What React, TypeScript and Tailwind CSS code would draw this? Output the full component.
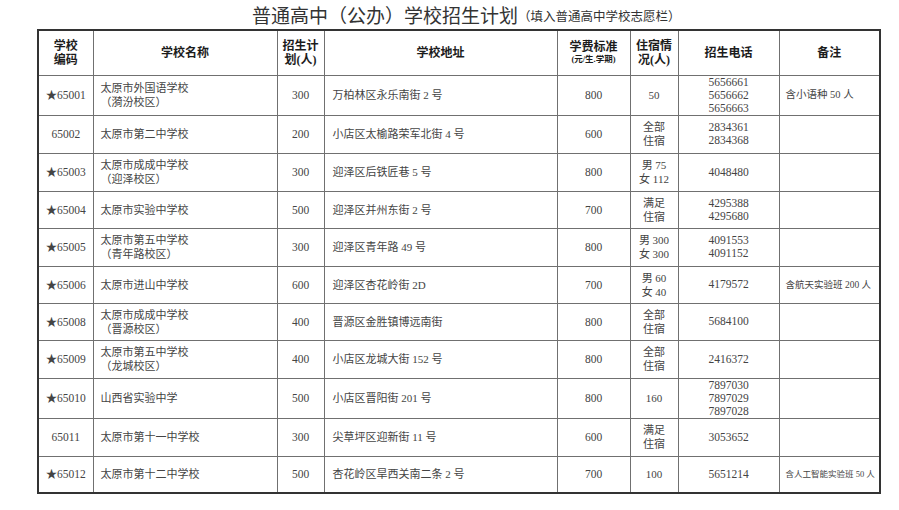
import React from 'react';

type Row = {
  code: string;
  name: string[];
  plan: string;
  addr: string;
  fee: string;
  dorm: string[];
  phone: string[];
  note?: string;
  noteSize?: string;
  h: string;
};

const rows: Row[] = [
  { code: '★65001', name: ['太原市外国语学校', '（漪汾校区）'], plan: '300', addr: '万柏林区永乐南街 2 号', fee: '800', dorm: ['50'], phone: ['5656661', '5656662', '5656663'], note: '含小语种 50 人', noteSize: 'text-[10.5px]', h: 'h-[40px]' },
  { code: '65002', name: ['太原市第二中学校'], plan: '200', addr: '小店区太榆路荣军北街 4 号', fee: '600', dorm: ['全部', '住宿'], phone: ['2834361', '2834368'], h: 'h-[38px]' },
  { code: '★65003', name: ['太原市成成中学校', '（迎泽校区）'], plan: '300', addr: '迎泽区后铁匠巷 5 号', fee: '800', dorm: ['男 75', '女 112'], phone: ['4048480'], h: 'h-[38px]' },
  { code: '★65004', name: ['太原市实验中学校'], plan: '500', addr: '迎泽区并州东街 2 号', fee: '700', dorm: ['满足', '住宿'], phone: ['4295388', '4295680'], h: 'h-[37px]' },
  { code: '★65005', name: ['太原市第五中学校', '（青年路校区）'], plan: '300', addr: '迎泽区青年路 49 号', fee: '800', dorm: ['男 300', '女 300'], phone: ['4091553', '4091152'], h: 'h-[38px]' },
  { code: '★65006', name: ['太原市进山中学校'], plan: '600', addr: '迎泽区杏花岭街 2D', fee: '700', dorm: ['男 60', '女 40'], phone: ['4179572'], note: '含航天实验班 200 人', noteSize: 'text-[9.5px]', h: 'h-[37px]' },
  { code: '★65008', name: ['太原市成成中学校', '（晋源校区）'], plan: '400', addr: '晋源区金胜镇博远南街', fee: '800', dorm: ['全部', '住宿'], phone: ['5684100'], h: 'h-[37px]' },
  { code: '★65009', name: ['太原市第五中学校', '（龙城校区）'], plan: '400', addr: '小店区龙城大街 152 号', fee: '800', dorm: ['全部', '住宿'], phone: ['2416372'], h: 'h-[38px]' },
  { code: '★65010', name: ['山西省实验中学'], plan: '500', addr: '小店区晋阳街 201 号', fee: '800', dorm: ['160'], phone: ['7897030', '7897029', '7897028'], h: 'h-[40px]' },
  { code: '65011', name: ['太原市第十一中学校'], plan: '300', addr: '尖草坪区迎新街 11 号', fee: '600', dorm: ['满足', '住宿'], phone: ['3053652'], h: 'h-[38px]' },
  { code: '★65012', name: ['太原市第十二中学校'], plan: '500', addr: '杏花岭区旱西关南二条 2 号', fee: '700', dorm: ['100'], phone: ['5651214'], note: '含人工智能实验班 50 人', noteSize: 'text-[8.5px]', h: 'h-[37px]' },
];

const td = 'border border-[#707070] p-0 align-middle';
const th = 'border border-[#707070] p-0 align-middle text-center font-bold text-[#1c1c1c] text-[12px] leading-[14px]';

export default function App() {
  return (
    <div
      className="w-[899px] h-[510px] bg-white text-[#444]"
      style={{ fontFamily: '"Liberation Serif", "Noto Sans CJK SC", serif' }}
    >
      <div className="h-[29px] pl-[252px] flex items-center">
        <span className="text-[19px] leading-[26px] text-[#333]" style={{ fontFamily: '"Noto Sans CJK SC", sans-serif' }}>
          普通高中（公办）学校招生计划
        </span>
        <span className="text-[12.5px] leading-[26px] text-[#333] pt-[2px]" style={{ fontFamily: '"Noto Sans CJK SC", sans-serif' }}>
          （填入普通高中学校志愿栏）
        </span>
      </div>
      <table className="ml-[37px] w-[842px] table-fixed border-collapse border-2 border-[#333]">
        <colgroup>
          <col className="w-[55px]" />
          <col className="w-[184px]" />
          <col className="w-[47px]" />
          <col className="w-[233px]" />
          <col className="w-[73px]" />
          <col className="w-[48px]" />
          <col className="w-[101px]" />
          <col className="w-[101px]" />
        </colgroup>
        <thead>
          <tr className="h-[45px]">
            <th className={th}>学校<br />编码</th>
            <th className={th}>学校名称</th>
            <th className={th}>招生计<br />划(人)</th>
            <th className={th}>学校地址</th>
            <th className={th}>
              学费标准
              <div className="text-[8.5px] leading-[11px]">(元/生.学期)</div>
            </th>
            <th className={th}>住宿情<br />况(人)</th>
            <th className={th}>招生电话</th>
            <th className={th}>备注</th>
          </tr>
        </thead>
        <tbody className="text-[11px] leading-[14px]">
          {rows.map((r) => (
            <tr key={r.code} className={r.h}>
              <td className={`${td} text-center text-[11.5px]`}>{r.code}</td>
              <td className={`${td} pl-[7px]`}>
                {r.name.map((n, i) => (
                  <div key={i}>{n}</div>
                ))}
              </td>
              <td className={`${td} text-center text-[11.5px]`}>{r.plan}</td>
              <td className={`${td} pl-[8px]`}>{r.addr}</td>
              <td className={`${td} text-center text-[11.5px]`}>{r.fee}</td>
              <td className={`${td} text-center`}>
                {r.dorm.map((d, i) => (
                  <div key={i}>{d}</div>
                ))}
              </td>
              <td className={`${td} text-center text-[11.5px] leading-[13px]`}>
                {r.phone.map((p, i) => (
                  <div key={i}>{p}</div>
                ))}
              </td>
              <td className={`${td} pl-[6px] whitespace-nowrap ${r.noteSize ?? ''}`}>{r.note}</td>
            </tr>
          ))}
        </tbody>
      </table>
    </div>
  );
}
